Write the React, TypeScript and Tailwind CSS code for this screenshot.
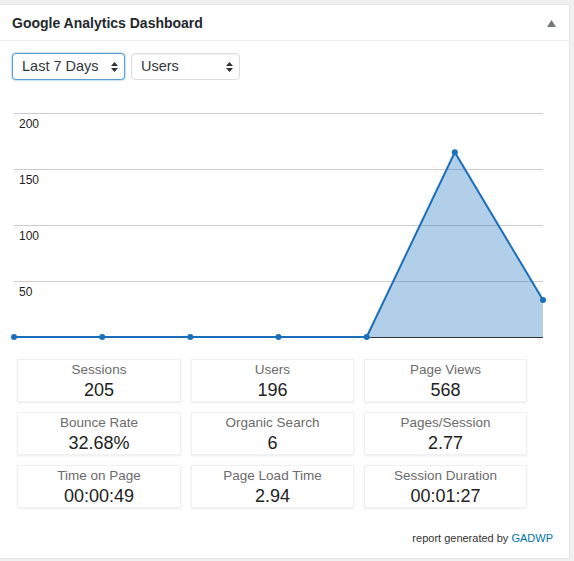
const points = [0, 0, 0, 0, 0, 165, 33];
const X0 = 14;
const STEP = (543 - 14) / 6;
const Y0 = 337 - 80; // baseline inside the chart svg
const SCALE = 1.12;

const metrics = [
  { label: "Sessions", value: "205" },
  { label: "Users", value: "196" },
  { label: "Page Views", value: "568" },
  { label: "Bounce Rate", value: "32.68%" },
  { label: "Organic Search", value: "6" },
  { label: "Pages/Session", value: "2.77" },
  { label: "Time on Page", value: "00:00:49" },
  { label: "Page Load Time", value: "2.94" },
  { label: "Session Duration", value: "00:01:27" },
];

function SelectBox({ label, width, focused }: { label: string; width: string; focused?: boolean }) {
  return (
    <div
      className={`flex h-[27px] items-center justify-between rounded-[4px] border bg-white pl-[9px] pr-[6px] text-[14.5px] text-[#32373c] ${width} ${
        focused
          ? "border-[#5b9dd9] shadow-[0_0_2px_rgba(30,140,190,0.8)]"
          : "border-[#ddd] shadow-[inset_0_1px_2px_rgba(0,0,0,0.07)]"
      }`}
    >
      <span>{label}</span>
      <svg width="7" height="12" viewBox="0 0 7 12" className="text-[#333]">
        <polygon points="3.5,1 7,5 0,5" fill="currentColor" />
        <polygon points="0,7 7,7 3.5,11" fill="currentColor" />
      </svg>
    </div>
  );
}

function Chart() {
  const coords = points.map((v, i) => [X0 + i * STEP, Y0 - v * SCALE]);
  const line = coords.map(([x, y]) => `${x},${y}`).join(" ");
  const area = `M${coords[4][0]},${Y0} L${coords[5][0]},${coords[5][1]} L${coords[6][0]},${coords[6][1]} L${coords[6][0]},${Y0} Z`;
  const grid = [
    { y: 113 - 80, label: "200" },
    { y: 169 - 80, label: "150" },
    { y: 225 - 80, label: "100" },
    { y: 281 - 80, label: "50" },
  ];
  return (
    <svg width="569" height="270" className="block">
      {grid.map((g) => (
        <g key={g.label}>
          <line x1={X0} x2={543} y1={g.y + 0.5} y2={g.y + 0.5} stroke="#cccccc" strokeWidth="1" />
          <text x="19" y={g.y + 15} fontSize="12" fill="#222" fontFamily="'Liberation Sans', Arial, sans-serif">
            {g.label}
          </text>
        </g>
      ))}
      <path d={area} fill="#1e73be" fillOpacity="0.34" />
      <line x1={X0} x2={543} y1={Y0 + 0.5} y2={Y0 + 0.5} stroke="#333" strokeWidth="1" />
      <polyline points={line} fill="none" stroke="#1b6eb9" strokeWidth="2" strokeLinejoin="round" />
      {coords.map(([x, y], i) => (
        <circle key={i} cx={x} cy={y} r="3" fill="#1b6eb9" />
      ))}
    </svg>
  );
}

export default function App() {
  return (
    <div
      className="h-[561px] w-[574px] bg-[#f1f1f1] pr-[4px] pt-[4px]"
      style={{ fontFamily: "'Liberation Sans', Arial, sans-serif" }}
    >
      <div className="h-[555px] border-b border-r border-t border-[#e5e5e5] bg-white">
        <div className="flex h-[36px] items-center justify-between border-b border-[#eeeeee] pl-[12px] pr-[13px] pt-[1px]">
          <h2 className="text-[14px] font-bold text-[#23282d]">Google Analytics Dashboard</h2>
          <svg width="9" height="7" viewBox="0 0 9 7">
            <polygon points="4.5,0 9,7 0,7" fill="#72777c" />
          </svg>
        </div>

        <div className="flex gap-[6px] pl-[12px] pt-[12px]">
          <SelectBox label="Last 7 Days" width="w-[113px]" focused />
          <SelectBox label="Users" width="w-[109px]" />
        </div>

        <Chart />

        <div className="ml-[17px] mt-[9px] grid grid-cols-[164px_163px_163px] gap-x-[10px] gap-y-[10px]">
          {metrics.map((m) => (
            <div
              key={m.label}
              className="flex h-[43px] flex-col items-center justify-center border border-[#f0f0f0] bg-white shadow-[0_1px_2px_rgba(0,0,0,0.08)]"
            >
              <div className="text-[13.5px] leading-[18px] text-[#6b6b6b]">{m.label}</div>
              <div className="text-[18px] leading-[22px] text-[#222]">{m.value}</div>
            </div>
          ))}
        </div>

        <div className="mt-[23px] pr-[16px] text-right text-[11px] leading-[14px] text-[#333]">
          report generated by <span className="text-[#0073aa]">GADWP</span>
        </div>
      </div>
    </div>
  );
}
